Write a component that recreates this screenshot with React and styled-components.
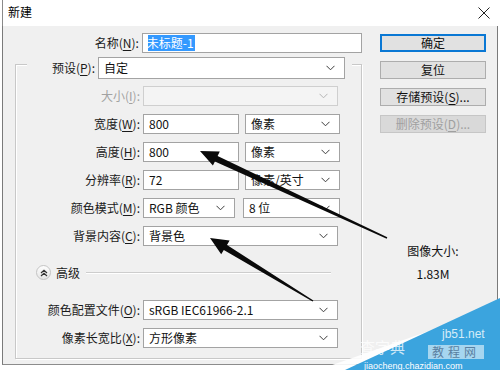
import React from "react";
import styled, { createGlobalStyle } from "styled-components";

const GlobalStyle = createGlobalStyle`
  html, body { margin: 0; padding: 0; background: #fff; }
  body { font-family: "Noto Sans CJK SC", "Noto Sans", sans-serif; font-size: 12px; color: #000; }
  * { box-sizing: border-box; }
`;

const Window = styled.div`
  position: relative;
  width: 500px;
  height: 370px;
  overflow: hidden;
  background: #fff;
`;

const TitleBar = styled.div`
  height: 26px;
  display: flex;
  align-items: center;
  justify-content: space-between;
  padding: 0 10px 0 5px;
  border-left: 1px solid #8a8a8a;
  margin-left: 2px;
`;

const Title = styled.span`
  font-size: 12px;
  line-height: 14px;
  margin-top: -2px;
`;

const Body = styled.div`
  display: flex;
  margin: 0 2px;
  height: 339px;
  background: #f0f0f0;
  border-left: 1px solid #7a7a7a;
  border-right: 1px solid #7a7a7a;
  border-bottom: 1px solid #8c8c8c;
`;

const Main = styled.div`
  width: 359px;
  padding-top: 7px;
`;

const Row = styled.div`
  display: flex;
  align-items: center;
  gap: 3px;
  height: 20px;
  margin-top: ${(p) => p.$mt ?? 8}px;
`;

const Label = styled.label`
  width: ${(p) => p.$w}px;
  text-align: right;
  white-space: nowrap;
  color: ${(p) => (p.$disabled ? "#a2a2a2" : "#1a1a1a")};
  line-height: 16px;
  u { text-underline-offset: 2px; }
`;

const Field = styled.div`
  display: flex;
  align-items: center;
  width: ${(p) => p.$w}px;
  height: ${(p) => p.$h ?? 20}px;
  padding: 0 9px 0 5px;
  background: ${(p) => (p.$disabled ? "#f4f4f4" : "#fff")};
  border: 1px solid ${(p) => (p.$disabled ? "#cfcfcf" : "#a3a3a3")};
  color: #111;
  white-space: nowrap;
  font-size: 12px;
  line-height: 16px;
`;

const Value = styled.span`
  flex: 1;
  overflow: hidden;
`;

const Selected = styled.span`
  background: #3399ff;
  color: #fff;
  padding: 0 1px;
  margin-left: -2px;
`;

const Spacer = styled.span`
  width: ${(p) => p.$w ?? 0}px;
`;

const Chevron = ({ disabled }) => (
  <svg width="9" height="6" viewBox="0 0 9 6">
    <polyline
      points="0.5,0.8 4.5,4.8 8.5,0.8"
      fill="none"
      stroke={disabled ? "#b4b4b4" : "#3c3c3c"}
      strokeWidth="1"
    />
  </svg>
);

const Select = ({ w, h, disabled, children }) => (
  <Field $w={w} $h={h} $disabled={disabled}>
    <Value>{children}</Value>
    <Chevron disabled={disabled} />
  </Field>
);

const Group = styled.div`
  margin: 11px 0 0 12px;
  width: 347px;
  height: 295px;
  border: 1px solid #c8c8c8;
  box-shadow: inset 1px 1px 0 #fff, 1px 1px 0 #fff;
`;

const GroupHeader = styled.div`
  display: flex;
  align-items: center;
  gap: 3px;
  width: 325px;
  margin: -8px 0 0 11px;
  padding-right: 6px;
  background: #f0f0f0;
`;

const Advanced = styled.div`
  display: flex;
  align-items: center;
  gap: 5px;
  height: 15px;
  margin-top: 19px;
  padding-left: 20px;
  padding-right: 30px;
  color: #1a1a1a;
`;

const ToggleIcon = styled.span`
  display: flex;
  align-items: center;
  justify-content: center;
  width: 15px;
  height: 15px;
  border-radius: 50%;
  border: 1px solid #c4c4c4;
  background: linear-gradient(#fdfdfd, #e6e6e6);
`;

const Rule = styled.div`
  flex: 1;
  height: 1px;
  margin-left: 1px;
  background: #cdcdcd;
  box-shadow: 0 1px 0 #fff;
`;

const Side = styled.div`
  flex: 1;
  display: flex;
  flex-direction: column;
  padding: 8px 0 0 18px;
  gap: 9px;
`;

const Button = styled.div`
  width: 106px;
  height: 18px;
  display: flex;
  align-items: center;
  justify-content: center;
  background: ${(p) => (p.$disabled ? "#d9d9d9" : "#e1e1e1")};
  border: ${(p) => (p.$primary ? "2px solid #0a78d4" : "1px solid #adadad")};
  border-color: ${(p) => (p.$disabled ? "#c6c6c6" : undefined)};
  color: ${(p) => (p.$disabled ? "#a0a0a0" : "#111")};
  font-size: 12px;
  line-height: 14px;
  u { text-underline-offset: 2px; }
`;

const ImageSize = styled.div`
  margin-top: 97px;
  width: 106px;
  text-align: center;
  line-height: 23px;
  color: #111;
`;

const Overlay = styled.svg`
  position: absolute;
  left: 0;
  top: 0;
  pointer-events: none;
`;

export default function App() {
  return (
    <Window>
      <GlobalStyle />
      <TitleBar>
        <Title>新建</Title>
        <svg width="12" height="12" viewBox="0 0 12 12">
          <path d="M0.5 0.5 L11.5 11.5 M11.5 0.5 L0.5 11.5" stroke="#222" strokeWidth="1" />
        </svg>
      </TitleBar>
      <Body>
        <Main>
          <Row $mt={0}>
            <Label $w={137}>
              名称(<u>N</u>):
            </Label>
            <Field $w={222}>
              <Value>
                <Selected>未标题-1</Selected>
              </Value>
            </Field>
          </Row>
          <Group>
            <GroupHeader>
              <Label $w={68}>
                预设(<u>P</u>):
              </Label>
              <Select w={247} h={22}>
                自定
              </Select>
            </GroupHeader>
            <Row $mt={7}>
              <Label $w={124} $disabled>
                大小(<u>I</u>):
              </Label>
              <Select w={195} disabled />
            </Row>
            <Row>
              <Label $w={124}>
                宽度(<u>W</u>):
              </Label>
              <Field $w={96}>800</Field>
              <Spacer />
              <Select w={95}>像素</Select>
            </Row>
            <Row>
              <Label $w={124}>
                高度(<u>H</u>):
              </Label>
              <Field $w={96}>800</Field>
              <Spacer />
              <Select w={95}>像素</Select>
            </Row>
            <Row>
              <Label $w={124}>
                分辨率(<u>R</u>):
              </Label>
              <Field $w={96}>72</Field>
              <Spacer />
              <Select w={95}>像素/英寸</Select>
            </Row>
            <Row>
              <Label $w={124}>
                颜色模式(<u>M</u>):
              </Label>
              <Select w={92}>RGB 颜色</Select>
              <Spacer $w={2} />
              <Select w={97}>8 位</Select>
            </Row>
            <Row>
              <Label $w={124}>
                背景内容(<u>C</u>):
              </Label>
              <Select w={195}>背景色</Select>
            </Row>
            <Advanced>
              <ToggleIcon>
                <svg width="8" height="8" viewBox="0 0 8 8">
                  <path d="M1 4 L4 1.2 L7 4 M1 7 L4 4.2 L7 7" fill="none" stroke="#333" strokeWidth="1.2" />
                </svg>
              </ToggleIcon>
              <span>高级</span>
              <Rule />
            </Advanced>
            <Row $mt={20}>
              <Label $w={124}>
                颜色配置文件(<u>O</u>):
              </Label>
              <Select w={195}>sRGB IEC61966-2.1</Select>
            </Row>
            <Row>
              <Label $w={124}>
                像素长宽比(<u>X</u>):
              </Label>
              <Select w={195}>方形像素</Select>
            </Row>
          </Group>
        </Main>
        <Side>
          <Button $primary>确定</Button>
          <Button>复位</Button>
          <Button>
            存储预设(<u>S</u>)...
          </Button>
          <Button $disabled>
            删除预设(<u>D</u>)...
          </Button>
          <ImageSize>
            <div>图像大小:</div>
            <div>1.83M</div>
          </ImageSize>
        </Side>
      </Body>
      <Overlay width="500" height="370" viewBox="0 0 500 370">
        <polygon
          points="200,151 219.8,151.6 217.6,156 387.3,237.3 386.7,238.7 214.9,161.6 212.9,165.6"
          fill="#0a0a0a"
        />
        <polygon
          points="210,238 229.6,240.6 227,245 313.4,300.5 312.6,301.5 223.8,250 221.2,254.2"
          fill="#0a0a0a"
        />
        <polygon points="318,370 500,306 500,318 340,370" fill="#ffffff" opacity="0.9" />
        <polygon points="345,370 500,298 500,370" fill="#3ba4de" />
        <text x="442" y="338" fontSize="12" fill="#d6ecf8" fontFamily="Liberation Sans, sans-serif">
          jb51.net
        </text>
        <rect x="428" y="345" width="56" height="14" fill="#ffffff" opacity="0.55" />
        <text x="432" y="357" fontSize="12" fill="#5a7fa0" letterSpacing="4">
          教程网
        </text>
        <text x="360" y="353" fontSize="15" fill="#ffffff" opacity="0.75">
          查字典
        </text>
        <text x="364" y="369" fontSize="9" fill="#ffffff" fontFamily="Liberation Sans, sans-serif">
          jiaocheng.chazidian.com
        </text>
      </Overlay>
    </Window>
  );
}
